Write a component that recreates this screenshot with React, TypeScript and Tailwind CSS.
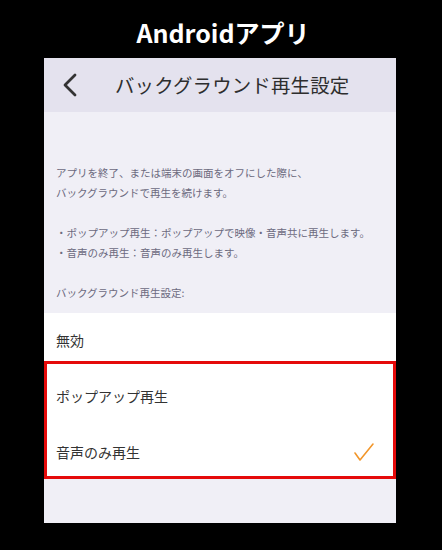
import React from "react";

export default function App() {
  const font = { fontFamily: '"Noto Sans CJK JP", "Noto Sans", sans-serif' };
  return (
    <div className="w-[442px] h-[550px] bg-black flex flex-col" style={font}>
      <div className="h-[58px] w-full flex items-center justify-center text-white font-bold text-[25px] leading-none pt-[6px] pl-[4px]">
        Androidアプリ
      </div>
      <div className="w-[352px] ml-[44px] flex flex-col">
        <div className="h-[54px] bg-[#e4e2ee] flex items-center pl-[18px]">
          <svg width="16" height="24" viewBox="0 0 16 24" className="shrink-0">
            <path d="M13 2 L3 12 L13 22" fill="none" stroke="#333" strokeWidth="2.8" strokeLinecap="round" strokeLinejoin="round" />
          </svg>
          <span className="ml-[37px] text-[19.4px] text-[#2e2e2e] leading-none tracking-[0.2px]">バックグラウンド再生設定</span>
        </div>
        <div className="bg-[#f0eff6] pt-[51px] pb-[10px] pl-[12px] text-[10.5px] leading-[20px] text-[#6c6a7e]">
          <p>アプリを終了、または端末の画面をオフにした際に、</p>
          <p>バックグラウンドで再生を続けます。</p>
          <p>&nbsp;</p>
          <p>・ポップアップ再生：ポップアップで映像・音声共に再生します。</p>
          <p>・音声のみ再生：音声のみ再生します。</p>
          <p>&nbsp;</p>
          <p>バックグラウンド再生設定:</p>
        </div>
        <div className="bg-white h-[48px] flex items-center pl-[12px] pt-[6px] text-[14px] text-[#333]">無効</div>
        <div className="bg-white border-[3px] border-[#e50a0a] flex flex-col">
          <div className="h-[64px] flex items-center pl-[9px] text-[14px] text-[#333]">ポップアップ再生</div>
          <div className="h-[48px] flex items-center justify-between pl-[9px] pr-[18px] text-[14px] text-[#333]">
            <span>音声のみ再生</span>
            <svg width="22" height="20" viewBox="0 0 22 20">
              <path d="M2 11 L7 18 L20 2" fill="none" stroke="#f2962a" strokeWidth="1.6" strokeLinecap="round" strokeLinejoin="round" />
            </svg>
          </div>
        </div>
        <div className="h-[44px] bg-[#f0eff6]" />
      </div>
    </div>
  );
}
